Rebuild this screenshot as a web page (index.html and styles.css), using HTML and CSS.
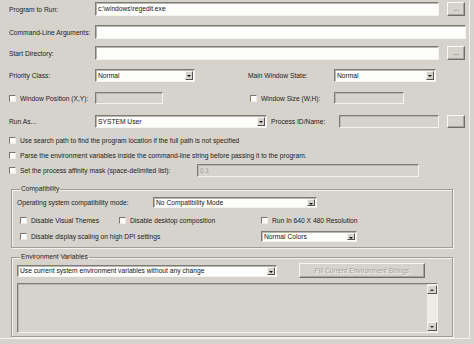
FILE: index.html
```html
<html>

<head>
    <title>
        Run Program
    </title>
    <link rel="stylesheet" href="styles.css">
</head>

<body>

<div class="dialog">

    <div class="row r1">
        <span class="label">Program to Run:</span>
        <div class="field w-path">c:\windows\regedit.exe</div>
        <div class="btn dots">...</div>
    </div>

    <div class="row r2">
        <span class="label">Command-Line Arguments:</span>
        <div class="field w-args"></div>
    </div>

    <div class="row r3">
        <span class="label">Start Directory:</span>
        <div class="field w-path"></div>
        <div class="btn dots">...</div>
    </div>

    <div class="row r4">
        <span class="label">Priority Class:</span>
        <div class="field select w-prio">Normal<span class="arrow"></span></div>
        <span class="label label-right">Main Window State:</span>
        <div class="field select w-state">Normal<span class="arrow"></span></div>
    </div>

    <div class="row r5">
        <label class="check w-pos"><span class="box"></span>Window Position (X,Y):</label>
        <div class="field off w-xy"></div>
        <label class="check w-size"><span class="box"></span>Window Size (W,H):</label>
        <div class="field off w-wh"></div>
    </div>

    <div class="row r6">
        <span class="label">Run As...</span>
        <div class="field select w-runas">SYSTEM User<span class="arrow"></span></div>
        <span class="label label-pid">Process ID/Name:</span>
        <div class="field off w-pid"></div>
        <div class="btn dots off-btn"></div>
    </div>

    <div class="row r7">
        <label class="check"><span class="box"></span>Use search path to find the program location if the full path is not specified</label>
    </div>

    <div class="row r8">
        <label class="check"><span class="box"></span>Parse the environment variables inside the command-line string before passing it to the program.</label>
    </div>

    <div class="row r9">
        <label class="check w-aff"><span class="box"></span>Set the process affinity mask (space-delimited list):</label>
        <div class="field off w-mask"><span class="grey">0 1</span></div>
    </div>

    <fieldset class="group compat">
        <legend>Compatibility</legend>
        <div class="row g1">
            <span class="label w-os">Operating system compatibility mode:</span>
            <div class="field select w-mode">No Compatibility Mode<span class="arrow"></span></div>
        </div>
        <div class="row g2">
            <label class="check c1"><span class="box"></span>Disable Visual Themes</label>
            <label class="check c2"><span class="box"></span>Disable desktop composition</label>
            <label class="check"><span class="box"></span>Run In 640 X 480 Resolution</label>
        </div>
        <div class="row g3">
            <label class="check c3"><span class="box"></span>Disable display scaling on high DPI settings</label>
            <div class="field select w-colors">Normal Colors<span class="arrow"></span></div>
        </div>
    </fieldset>

    <fieldset class="group env">
        <legend>Environment Variables</legend>
        <div class="row e1">
            <div class="field select w-env">Use current system environment variables without any change<span class="arrow"></span></div>
            <div class="btn fill">Fill Current Environment Strings</div>
        </div>
        <div class="field off listbox">
            <div class="scroll">
                <span class="sbtn"><span class="up"></span></span>
                <span class="sbtn"><span class="down"></span></span>
            </div>
        </div>
    </fieldset>

</div>

</body>
</html>
```

FILE: styles.css
```css
body {
    margin: 0;
    background: #d6d3cd;
}

.dialog {
    width: 470px;
    height: 339px;
    box-sizing: border-box;
    padding: 2px 0 0 9px;
    background: #d6d3cd;
    border-right: 1px solid #f3f2ef;
    border-bottom: 1px solid #f3f2ef;
    font-family: "Liberation Sans", Arial, sans-serif;
    font-size: 6.7px;
    color: #222120;
}

.row {
    display: flex;
    align-items: center;
    white-space: nowrap;
}

.label {
    width: 86px;
    flex: none;
}

.label-right {
    margin-left: 53px;
}

.label-pid {
    width: 68px;
    margin-left: 4px;
}

/* sunken text boxes */
.field {
    flex: none;
    box-sizing: border-box;
    background: #fdfdfc;
    border: 1px solid;
    border-color: #7d7b76 #f4f3f0 #f4f3f0 #7d7b76;
    box-shadow: inset 1px 1px 0 #b9b6b0;
    padding-left: 2px;
    color: #151515;
    position: relative;
    overflow: hidden;
}

.field.off {
    background: #d6d3cd;
}

.grey {
    color: #a29f99;
}

.select .arrow {
    position: absolute;
    right: 1px;
    top: 1px;
    bottom: 1px;
    width: 8px;
    box-sizing: border-box;
    background: #d6d3cd;
    border: 1px solid;
    border-color: #f6f5f3 #55534f #55534f #f6f5f3;
}

.select .arrow::after {
    content: "";
    position: absolute;
    left: 1px;
    top: 3px;
    border-left: 2px solid transparent;
    border-right: 2px solid transparent;
    border-top: 2px solid #111;
}

/* raised buttons */
.btn {
    flex: none;
    box-sizing: border-box;
    background: #d6d3cd;
    border: 1px solid;
    border-color: #f8f7f5 #6f6d69 #6f6d69 #f8f7f5;
    box-shadow: inset -1px -1px 0 #a8a59f;
    text-align: center;
    color: #4a4844;
}

.dots {
    width: 18px;
    height: 14px;
    margin-left: 8px;
    line-height: 12px;
}

.off-btn {
    height: 13px;
}

/* check boxes */
.check {
    display: flex;
    align-items: center;
    flex: none;
}

.box {
    width: 7px;
    height: 7px;
    box-sizing: border-box;
    margin-right: 4px;
    background: #fbfbfa;
    border: 1px solid;
    border-color: #78766f #eeede9 #eeede9 #78766f;
}

/* widths of each row */
.r1 { height: 14px; }
.r2 { height: 14px; margin-top: 9px; }
.r3 { height: 14px; margin-top: 7px; }
.r4 { height: 13px; margin-top: 9px; }
.r5 { height: 12px; margin-top: 10px; }
.r6 { height: 13px; margin-top: 11px; }
.r7 { height: 10px; margin-top: 7px; }
.r8 { height: 10px; margin-top: 5px; }
.r9 { height: 13px; margin-top: 4px; }

.r1 .field, .r2 .field, .r3 .field { height: 14px; line-height: 12px; }
.r4 .field, .r6 .field, .r9 .field { height: 13px; line-height: 11px; }
.r5 .field { height: 12px; }

.w-path { width: 344px; }
.w-args { width: 371px; }
.w-prio { width: 100px; }
.w-state { width: 102px; }
.w-pos { width: 86px; }
.w-xy { width: 68px; }
.w-size { width: 84px; margin-left: 87px; }
.w-wh { width: 70px; }
.w-runas { width: 172px; }
.w-pid { width: 100px; }
.w-aff { width: 188px; }
.w-mask { width: 222px; }

/* group boxes */
.group {
    margin: 0 0 0 2px;
    width: 442px;
    box-sizing: border-box;
    min-width: 0;
    border: 1px solid #9f9c95;
    box-shadow: 1px 1px 0 #f3f2ef, inset 1px 1px 0 #f3f2ef;
    padding: 0 0 0 5px;
}

.group legend {
    padding: 0 1px;
    margin-left: 3px;
    line-height: 8px;
    color: #222120;
}

.compat {
    margin-top: 8px;
    padding-top: 4px;
    padding-bottom: 5px;
}

.g1 { height: 11px; }
.g2 { height: 10px; margin-top: 7px; padding-left: 3px; }
.g3 { height: 11px; margin-top: 6px; padding-left: 3px; }

.w-os { width: 136px; }
.w-mode { width: 164px; height: 11px; line-height: 9px; }
.c1 { width: 99px; }
.c2 { width: 142px; }
.c3 { width: 241px; }
.w-colors { width: 96px; height: 11px; line-height: 9px; }

.env {
    margin-top: 5px;
    padding-top: 2px;
    padding-bottom: 3px;
}

.e1 { height: 15px; }

.w-env { width: 260px; height: 12px; line-height: 10px; }

.fill {
    width: 126px;
    height: 15px;
    margin-left: 22px;
    line-height: 13px;
    color: #a3a09a;
    text-shadow: 1px 1px 0 #f6f5f2;
}

.listbox {
    width: 421px;
    height: 50px;
    margin-top: 5px;
}

.scroll {
    position: absolute;
    right: 0;
    top: 0;
    bottom: 0;
    width: 10px;
    background: #edece8;
    display: flex;
    flex-direction: column;
    justify-content: space-between;
    padding: 1px 0;
    box-sizing: border-box;
}

.sbtn {
    display: block;
    height: 9px;
    box-sizing: border-box;
    background: #d6d3cd;
    border: 1px solid;
    border-color: #f6f5f3 #55534f #55534f #f6f5f3;
    position: relative;
}

.up, .down {
    position: absolute;
    left: 2px;
    top: 3px;
    border-left: 2px solid transparent;
    border-right: 2px solid transparent;
}

.up { border-bottom: 2px solid #333; }
.down { border-top: 2px solid #333; }
```
